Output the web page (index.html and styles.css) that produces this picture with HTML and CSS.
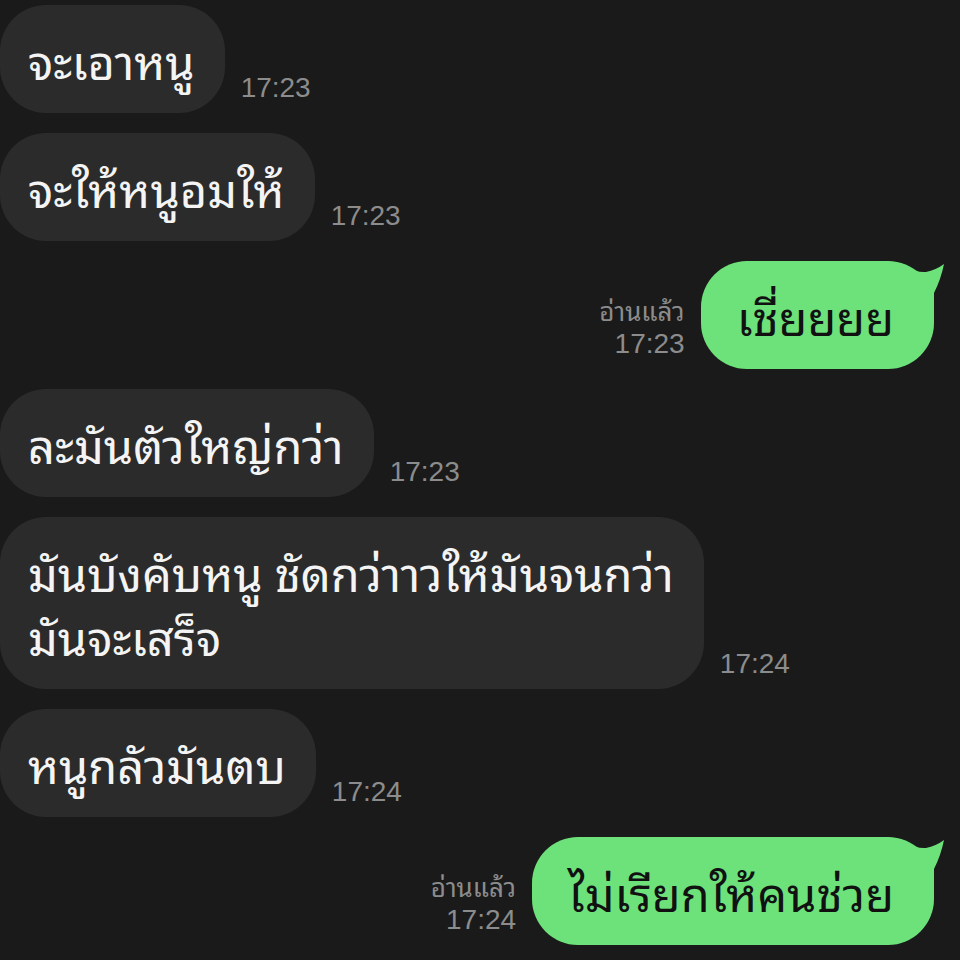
FILE: index.html
```html
<!DOCTYPE html>
<html lang="th">
<head>
    <meta charset="UTF-8">
    <meta name="viewport" content="width=device-width, initial-scale=1.0">
    <title>Chat</title>
    <link rel="stylesheet" href="styles.css">
</head>
<body>
    <main class="chat">
        <div class="row in">
            <div class="bubble">จะเอาหนู</div>
            <div class="meta"><span>17:23</span></div>
        </div>
        <div class="row in">
            <div class="bubble">จะให้หนูอมให้</div>
            <div class="meta"><span>17:23</span></div>
        </div>
        <div class="row out">
            <div class="meta"><span class="read">อ่านแล้ว</span><span>17:23</span></div>
            <div class="bubble">เชี่ยยยย
                <svg class="tail" viewBox="0 0 40 50" width="40" height="50"><path d="M0 4 Q10 12 20 11 Q30 9 38 3 Q35 18 28 32 L28 50 L0 50 Z"/></svg>
            </div>
        </div>
        <div class="row in">
            <div class="bubble">ละมันตัวใหญ่กว่า</div>
            <div class="meta"><span>17:23</span></div>
        </div>
        <div class="row in">
            <div class="bubble">
                <p>มันบังคับหนู ชัดกว่าาวให้มันจนกว่า</p>
                <p>มันจะเสร็จ</p>
            </div>
            <div class="meta"><span>17:24</span></div>
        </div>
        <div class="row in">
            <div class="bubble">หนูกลัวมันตบ</div>
            <div class="meta"><span>17:24</span></div>
        </div>
        <div class="row out">
            <div class="meta"><span class="read">อ่านแล้ว</span><span>17:24</span></div>
            <div class="bubble">ไม่เรียกให้คนช่วย
                <svg class="tail" viewBox="0 0 40 50" width="40" height="50"><path d="M0 4 Q10 12 20 11 Q30 9 38 3 Q35 18 28 32 L28 50 L0 50 Z"/></svg>
            </div>
        </div>
    </main>
</body>
</html>
```

FILE: styles.css
```css
:root {
    --background: #1a1a1a;
    --bubble-in: #2b2b2b;
    --bubble-out: #6de27b;
    --text-in: #f4f4f4;
    --text-out: #111111;
    --meta: #8c8c8c;
    --thai: "Noto Sans Thai Looped", "Loma", "Garuda", "Noto Sans Thai", "Noto Sans", sans-serif;
}

* {
    margin: 0;
    padding: 0;
    box-sizing: border-box;
}

body {
    background: var(--background);
    font-family: var(--thai);
    min-height: 100vh;
    overflow: hidden;
}

.chat {
    display: flex;
    flex-direction: column;
    gap: 20px;
    padding: 5px 0 0;
}

.row {
    display: flex;
    align-items: flex-end;
    gap: 16px;
}

.row.out {
    justify-content: flex-end;
    padding-right: 26px;
}

.bubble {
    position: relative;
    font-size: 47px;
    line-height: 64px;
    padding: 22px 30px 22px 28px;
    border-radius: 46px;
    background: var(--bubble-in);
    color: var(--text-in);
    white-space: nowrap;
}

.bubble p {
    height: 64px;
}

/* outgoing bubble with the little horn on its top-right corner */
.out .bubble {
    background: var(--bubble-out);
    color: var(--text-out);
    padding: 22px 40px 22px 36px;
}

.tail {
    position: absolute;
    top: 0;
    right: -12px;
    fill: var(--bubble-out);
}

.meta {
    display: flex;
    flex-direction: column;
    align-items: flex-end;
    font-family: "Liberation Sans", sans-serif;
    font-size: 28px;
    line-height: 33px;
    color: var(--meta);
    padding-bottom: 9px;
}

.meta .read {
    font-family: var(--thai);
    font-size: 26px;
    line-height: 30px;
    margin-bottom: 3px;
}
```
